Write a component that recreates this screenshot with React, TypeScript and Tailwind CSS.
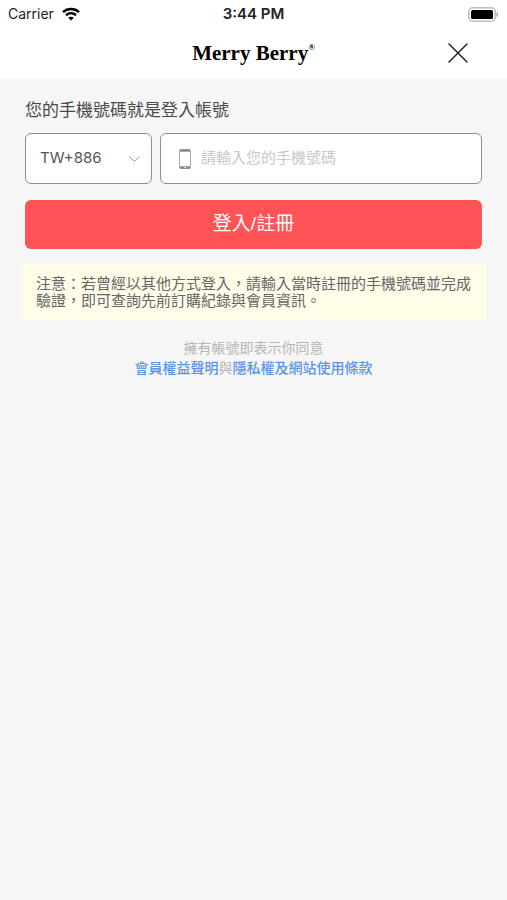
import React, { useState } from "react";

const countryCodes = [
  { value: "TW", label: "TW+886" },
  { value: "HK", label: "HK+852" },
  { value: "MO", label: "MO+853" },
];

function WifiIcon() {
  return (
    <svg width="18" height="14" viewBox="0 0 18 14" fill="none" stroke="#000" strokeWidth="2.5" aria-hidden="true">
      <path d="M1 5.1C5.5.9 12.5.9 17 5.1" />
      <path d="M4 8.3c2.9-2.6 7.1-2.6 10 0" />
      <path d="M9 13.6 6.2 10.8c1.6-1.4 4-1.4 5.6 0z" fill="#000" stroke="none" />
    </svg>
  );
}

function BatteryIcon() {
  return (
    <svg width="31" height="15" viewBox="0 0 31 15" aria-hidden="true">
      <rect x="0.75" y="0.75" width="26.5" height="13.5" rx="4" fill="#fff" stroke="#bdbdbd" strokeWidth="1.5" />
      <rect x="3" y="3" width="22" height="9" rx="1.5" fill="#000" />
      <path d="M28.5 5v5c2.2-.8 2.2-4.2 0-5z" fill="#a6a6a6" />
    </svg>
  );
}

function StatusBar() {
  return (
    <div className="grid h-7 grid-cols-[1fr_auto_1fr] items-center px-2 font-['Inter','Liberation_Sans',sans-serif]">
      <div className="flex items-center gap-2 text-sm text-[#222]">
        Carrier
        <WifiIcon />
      </div>
      <div className="text-center text-[15px] font-semibold text-[#222]">3:44 PM</div>
      <div className="flex justify-end">
        <BatteryIcon />
      </div>
    </div>
  );
}

function Header() {
  return (
    <header className="border-b border-[#f9f9f9] bg-white">
      <StatusBar />
      <div className="grid h-[50px] grid-cols-[1fr_auto_1fr] items-center px-[35px]">
        <h1 className="col-start-2 flex items-start font-['Liberation_Serif',serif] text-[21px] font-bold leading-6 text-black">
          Merry Berry
          <span className="text-[9px] leading-3">®</span>
        </h1>
        <button type="button" aria-label="關閉" className="justify-self-end p-1">
          <svg width="20" height="20" viewBox="0 0 20 20" stroke="#222" strokeWidth="1.5" strokeLinecap="round">
            <path d="M1 1l18 18M19 1 1 19" />
          </svg>
        </button>
      </div>
    </header>
  );
}

export default function App() {
  const [country, setCountry] = useState("TW");
  const [phone, setPhone] = useState("");

  return (
    <div className="min-h-screen bg-[#f6f6f6] font-['Liberation_Sans','Noto_Sans_CJK_TC',sans-serif]">
      <Header />

      <main className="px-[21px] pt-5">
        <form className="px-1" onSubmit={(e) => e.preventDefault()}>
          <label htmlFor="phone" className="block text-[17px] leading-6 text-[#4a4a4a]">
            您的手機號碼就是登入帳號
          </label>

          <div className="mt-2.5 flex gap-2">
            <div className="relative w-[127px] shrink-0">
              <select
                aria-label="國碼"
                value={country}
                onChange={(e) => setCountry(e.target.value)}
                className="h-[51px] w-full appearance-none rounded-md border border-[#8e8e8e] bg-white pl-3.5 pr-8 font-['Inter','Liberation_Sans',sans-serif] text-[15px] text-[#555]"
              >
                {countryCodes.map((c) => (
                  <option key={c.value} value={c.value}>
                    {c.label}
                  </option>
                ))}
              </select>
              {/* Dropdown arrow */}
              <svg
                className="pointer-events-none absolute right-3 top-1/2 -translate-y-1/2"
                width="11"
                height="7"
                viewBox="0 0 11 7"
                fill="none"
                stroke="#999"
              >
                <path d="M.5 1l5 5 5-5" />
              </svg>
            </div>

            <div className="flex h-[51px] min-w-0 flex-1 items-center gap-2.5 rounded-md border border-[#8e8e8e] bg-white pl-[18px] pr-4">
              <svg className="shrink-0" width="12" height="20" viewBox="0 0 12 20" aria-hidden="true">
                <rect x="0.5" y="0.5" width="11" height="19" rx="1" fill="#fff" stroke="#aaa" />
                <path d="M1 1.5h10M1 18.5h10" stroke="#8a8a8a" strokeWidth="2.5" />
                <path d="M5 18.5h2" stroke="#ddd" />
              </svg>
              <input
                id="phone"
                type="tel"
                value={phone}
                onChange={(e) => setPhone(e.target.value)}
                placeholder="請輸入您的手機號碼"
                className="min-w-0 flex-1 text-[15px] text-[#555] outline-none placeholder:text-[#c8c8c8]"
              />
            </div>
          </div>

          <button type="submit" className="mt-4 h-[49px] w-full rounded-md bg-[#ff5357] text-[19px] text-white">
            登入/註冊
          </button>
        </form>

        <p className="mt-[15px] bg-[#fffde8] px-[15px] py-[11px] text-[15px] leading-[17px] text-[#666]">
          注意：若曾經以其他方式登入，請輸入當時註冊的手機號碼並完成驗證，即可查詢先前訂購紀錄與會員資訊。
        </p>

        <p className="mt-[18px] text-center text-sm leading-5 text-[#b5b5b5]">
          擁有帳號即表示你同意
          <br />
          <a href="#member" className="font-medium text-[#5b93e6]">會員權益聲明</a>
          與
          <a href="#privacy" className="font-medium text-[#5b93e6]">隱私權及網站使用條款</a>
        </p>
      </main>
    </div>
  );
}
